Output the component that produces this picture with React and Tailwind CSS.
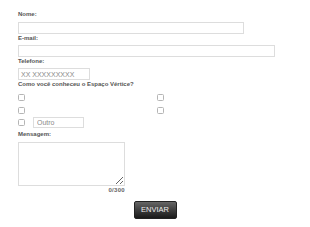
import React, { useState } from 'react';

const Label = ({ children, className = '' }) => (
    <label className={`block text-[6px] leading-[8px] font-bold text-[#555] ${className}`}>{children}</label>
);

const Box = () => (
    <span className="block w-[7px] h-[7px] border border-[#b5b5b5] rounded-[1.5px] bg-white" />
);

const App = () => {
    const [msg, setMsg] = useState('');

    return (
        <div className="w-[310px] h-[227px] bg-white font-['Liberation_Sans',Arial,sans-serif] overflow-hidden">
            <form className="pt-[10px]" onSubmit={e => e.preventDefault()}>
                <div className="pl-[18px]">
                    <Label>Nome:</Label>
                    <input className="block mt-[4px] w-[226px] h-[12px] border border-[#ddd] outline-none" />

                    <Label>E-mail:</Label>
                    <input className="block mt-[3px] w-[257px] h-[12px] border border-[#ddd] outline-none" />

                    <Label>Telefone:</Label>
                    <input
                        placeholder="XX XXXXXXXXX"
                        className="block mt-[3px] w-[72px] h-[12px] px-[2px] border border-[#ddd] outline-none text-[7px] placeholder:text-[#8a8a8a]"
                    />

                    <Label>Como você conheceu o Espaço Vértice?</Label>

                    {/* checkbox grid */}
                    <div className="grid grid-cols-[139px_auto] gap-y-[6px] mt-[6px]">
                        <Box />
                        <Box />
                        <Box />
                        <Box />
                    </div>
                    <div className="flex items-center gap-[8px] mt-[2.5px]">
                        <Box />
                        <input
                            placeholder="Outro"
                            className="block w-[51px] h-[11px] px-[3px] border border-[#ddd] outline-none text-[7px] placeholder:text-[#8a8a8a]"
                        />
                    </div>

                    <Label className="mt-[2px]">Mensagem:</Label>
                    <textarea
                        value={msg}
                        maxLength={300}
                        onChange={e => setMsg(e.target.value)}
                        className="block mt-[4px] w-[107px] h-[44px] border border-[#ddd] outline-none"
                    />
                    <div className="w-[107px] text-right text-[6px] leading-[6px] mt-[1px] font-bold text-[#666] tracking-[0.3px]">
                        {msg.length}/300
                    </div>
                </div>

                <div className="flex justify-center mt-[8px]">
                    <button
                        type="submit"
                        className="w-[43px] h-[18px] rounded-[2px] bg-gradient-to-b from-[#666] to-[#1a1a1a] border border-[#222] text-[#eee] text-[7.5px] font-normal leading-none"
                    >
                        ENVIAR
                    </button>
                </div>
            </form>
        </div>
    );
};

export default App;
